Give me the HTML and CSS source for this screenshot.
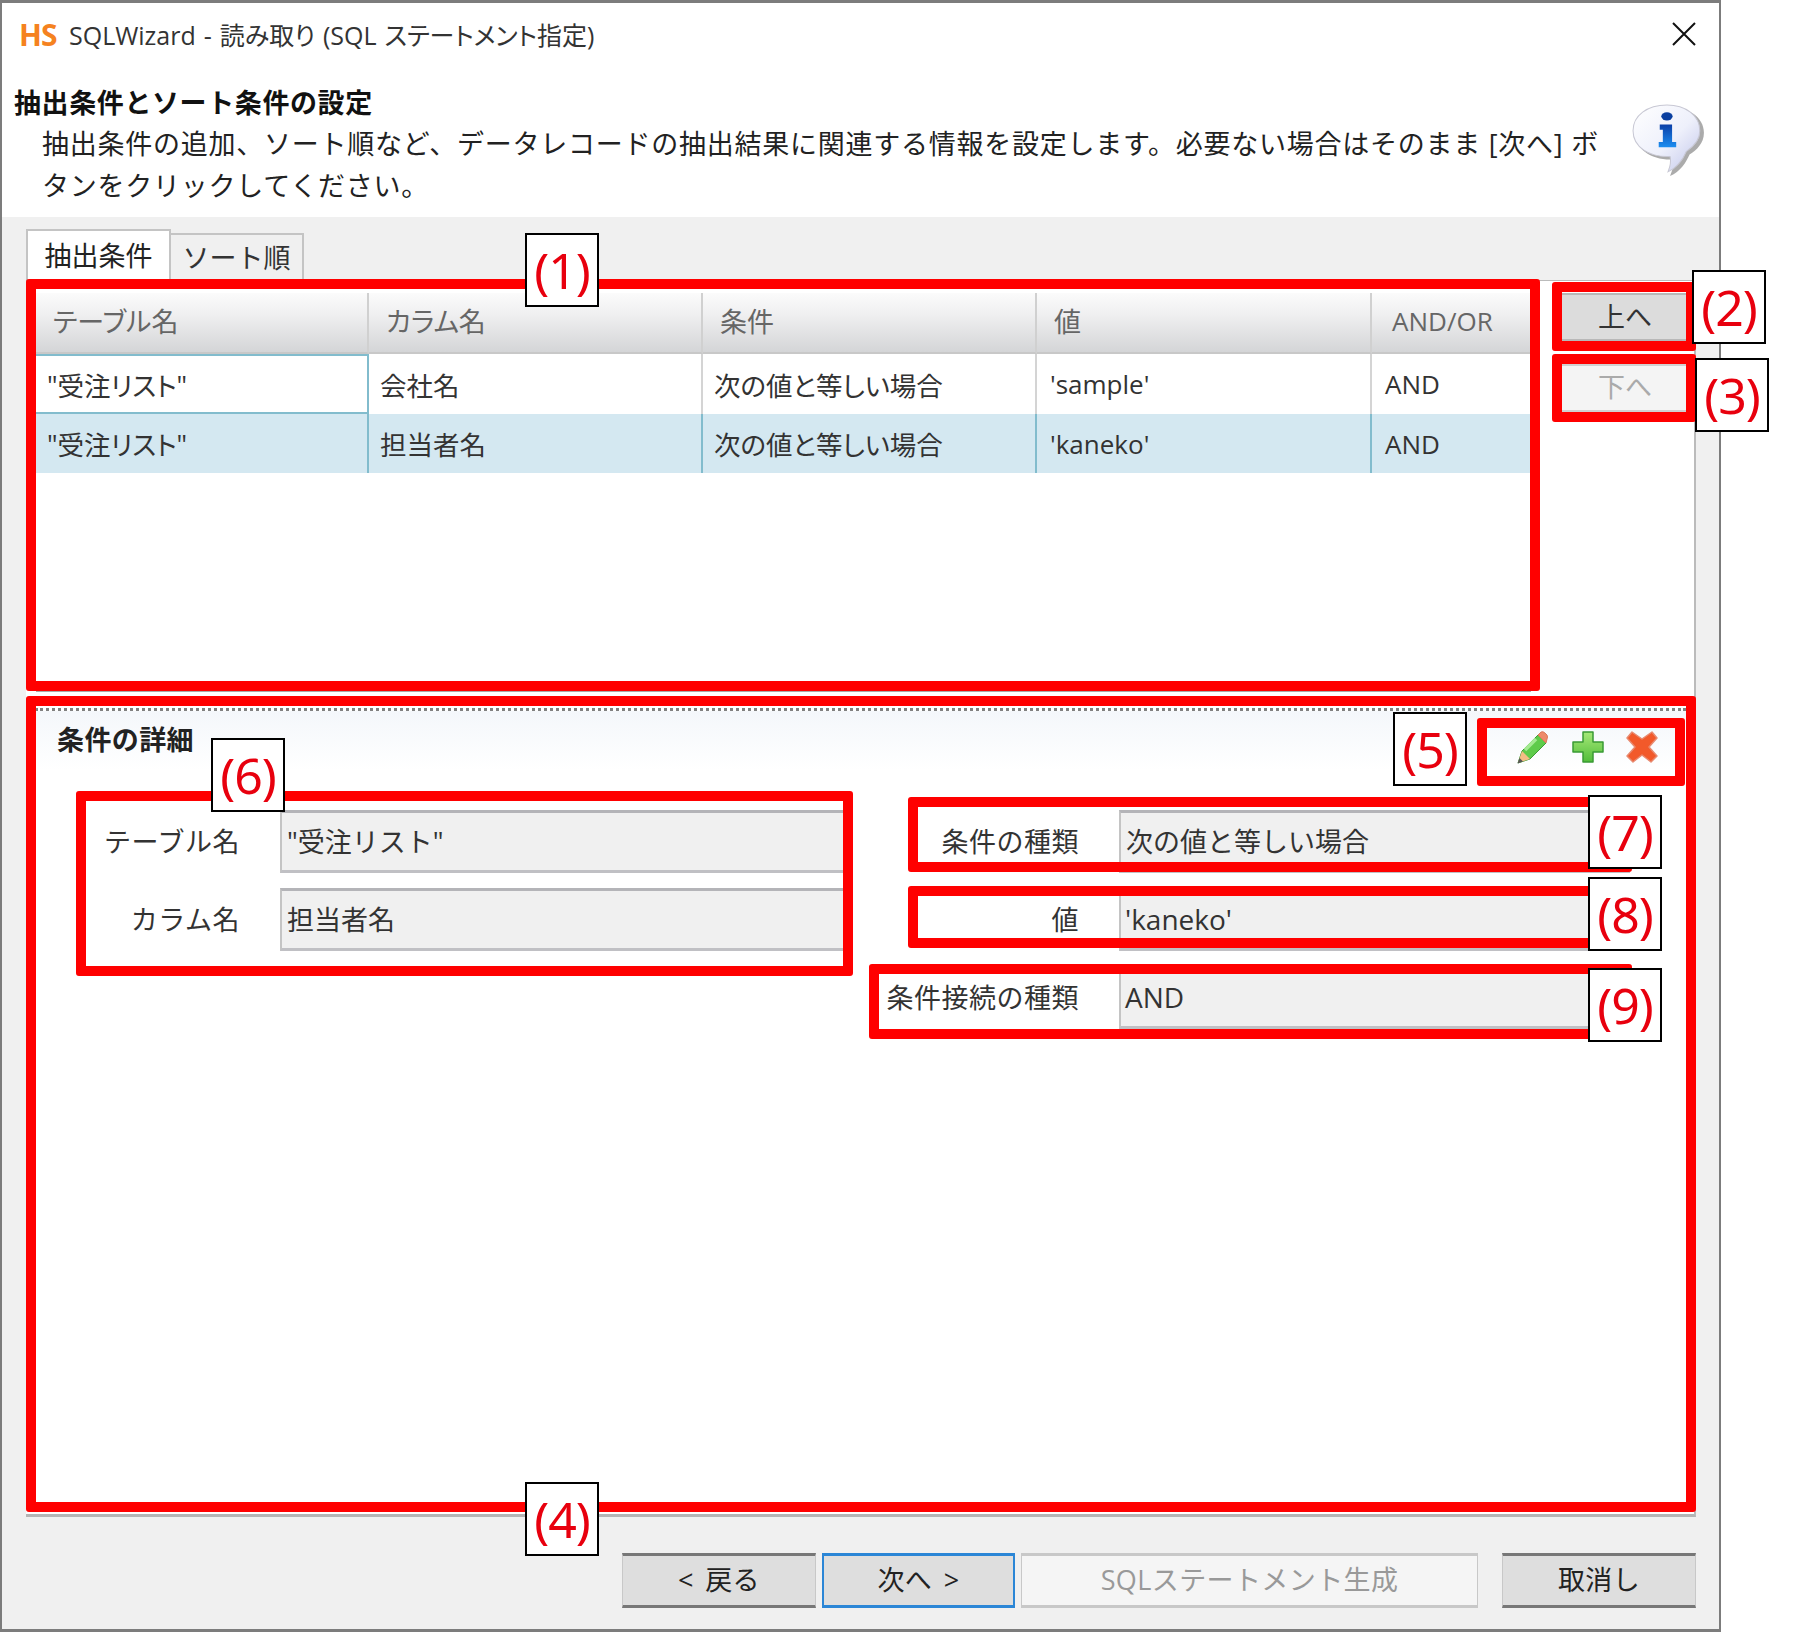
FILE: index.html
```html
<!DOCTYPE html>
<html lang="ja">
<head>
<meta charset="utf-8">
<title>SQLWizard</title>
<link rel="stylesheet" href="styles.css">
</head>
<body>
<div class="stage">
  <div class="window">
    <div class="titlebar">
      <span class="logo">HS</span>
      <span class="title">SQLWizard - 読み取り (SQL ステートメント指定)</span>
      <svg class="close" viewBox="0 0 24 24" width="24" height="24"><path d="M1 1 L23 23 M23 1 L1 23" stroke="#111" stroke-width="2" fill="none"/></svg>
    </div>
    <div class="header">
      <div class="header-text">
        <div class="heading">抽出条件とソート条件の設定</div>
        <div class="desc">抽出条件の追加、ソート順など、データレコードの抽出結果に関連する情報を設定します。必要ない場合はそのまま [次へ] ボ<br>タンをクリックしてください。</div>
      </div>
      <svg class="info" viewBox="0 0 72 72" width="74" height="74">
        <defs>
          <linearGradient id="bub" x1="0" y1="0" x2="1" y2="1"><stop offset="0" stop-color="#fff"/><stop offset="0.55" stop-color="#eef0fb"/><stop offset="1" stop-color="#bfc4ea"/></linearGradient>
          <linearGradient id="ib" x1="0" y1="0" x2="0" y2="1"><stop offset="0" stop-color="#0a3fa8"/><stop offset="1" stop-color="#1c8df0"/></linearGradient>
        </defs>
        <path d="M35 3 C54 3 69 13 69 28 C69 38 62 45 55 49 C52 56 46 66 36 70 C39 63 40 58 39 54 C18 55 2 44 2 28 C2 13 16 3 35 3 Z" fill="#8f8f8f" opacity="0.75" transform="translate(1 1)"/>
        <path d="M34 2 C52 2 66 12 66 27 C66 37 59 43 53 47 C50 54 44 63 35 67 C38 60 38 56 37 52 C17 53 1 43 1 27 C1 12 15 2 34 2 Z" fill="url(#bub)" stroke="#c8c8d4" stroke-width="1"/>
        <ellipse cx="34" cy="13" rx="5.5" ry="4" fill="#0a3fa0"/>
        <path d="M27 21 H39 V38 H43 V43 H26 V38 H30 V26 H27 Z" fill="url(#ib)"/>
      </svg>
    </div>
    <div class="content">
      <div class="tabs">
        <div class="tab tab-active">抽出条件</div>
        <div class="tab">ソート順</div>
      </div>
      <div class="panel">
        <div class="upper">
          <div class="table">
            <div class="th">テーブル名</div>
            <div class="th">カラム名</div>
            <div class="th">条件</div>
            <div class="th">値</div>
            <div class="th th-last lat">AND/OR</div>
            <div class="td td-focus">"受注リスト"</div>
            <div class="td">会社名</div>
            <div class="td">次の値と等しい場合</div>
            <div class="td lat">'sample'</div>
            <div class="td td-last lat">AND</div>
            <div class="td sel">"受注リスト"</div>
            <div class="td sel">担当者名</div>
            <div class="td sel">次の値と等しい場合</div>
            <div class="td sel lat">'kaneko'</div>
            <div class="td td-last sel lat">AND</div>
          </div>
          <div class="side">
            <button class="side-btn">上へ</button>
            <button class="side-btn side-off">下へ</button>
          </div>
        </div>
        <div class="detail">
          <div class="detail-head">
            <div class="detail-title">条件の詳細</div>
            <div class="tools">
              <svg class="pencil" viewBox="0 0 32 33" width="32" height="33">
                <path d="M2 32 L6 20 L22 4 L30 12 L14 28 Z" fill="#5ecb4a" stroke="#3f9c36" stroke-width="1"/>
                <path d="M22 4 L25 1 Q27 0 29 2 L31 4 Q32 6 31 8 L30 12 Z" fill="#ee8a6a" stroke="#d9785c" stroke-width="1"/>
                <path d="M20 8 L9 19" stroke="#a4ea92" stroke-width="3.5"/>
                <path d="M6 20 L14 28 L2 32 Z" fill="#f3bd84"/>
                <path d="M3.6 27 L7 30.4 L1.5 32.5 Z" fill="#555"/>
              </svg>
              <svg viewBox="0 0 32 32" width="32" height="32"><defs><linearGradient id="pl" x1="0" y1="0" x2="0" y2="1"><stop offset="0" stop-color="#a6e878"/><stop offset="1" stop-color="#52bd3a"/></linearGradient></defs><path d="M11 1 H21 V11 H31 V21 H21 V31 H11 V21 H1 V11 H11 Z" fill="url(#pl)" stroke="#3a9a34" stroke-width="1.5" stroke-linejoin="round"/></svg>
              <svg viewBox="0 0 32 32" width="32" height="32"><path d="M6 1 L16 8 L26 1 L31 7 L23 16 L31 25 L25 31 L16 24 L7 31 L1 25 L9 16 L1 7 Z" fill="#f2592a" stroke="#e88a70" stroke-width="1.5" stroke-linejoin="round"/></svg>
            </div>
          </div>
          <div class="detail-body">
            <div class="form form-left">
              <div class="label">テーブル名</div><div class="field">"受注リスト"</div>
              <div class="label">カラム名</div><div class="field">担当者名</div>
            </div>
            <div class="form form-right">
              <div class="label">条件の種類</div><div class="field">次の値と等しい場合</div>
              <div class="label">値</div><div class="field lat-field">'kaneko'</div>
              <div class="label">条件接続の種類</div><div class="field lat-field">AND</div>
            </div>
          </div>
        </div>
      </div>
      <div class="footer">
        <button class="foot-btn">&lt; 戻る</button>
        <button class="foot-btn foot-next">次へ &gt;</button>
        <button class="foot-btn foot-off">SQLステートメント生成</button>
        <button class="foot-btn foot-cancel">取消し</button>
      </div>
    </div>
  </div>

  <div class="mark m1"></div>
  <div class="mark m2"></div>
  <div class="mark m3"></div>
  <div class="mark m4"></div>
  <div class="mark m5"></div>
  <div class="mark m6"></div>
  <div class="mark m7"></div>
  <div class="mark m8"></div>
  <div class="mark m9"></div>
  <div class="num n1">(1)</div>
  <div class="num n2">(2)</div>
  <div class="num n3">(3)</div>
  <div class="num n4">(4)</div>
  <div class="num n5">(5)</div>
  <div class="num n6">(6)</div>
  <div class="num n7">(7)</div>
  <div class="num n8">(8)</div>
  <div class="num n9">(9)</div>
</div>
</body>
</html>
```

FILE: styles.css
```css
* { box-sizing: border-box; }
html, body { margin: 0; padding: 0; background: #fff; }
body {
  font-family: "Open Sans", "Noto Sans CJK JP", sans-serif;
  font-size: 27px;
  color: #222;
}
.stage { position: relative; width: 1797px; height: 1633px; overflow: hidden; }
.window {
  width: 1721px;
  height: 1632px;
  border: 2px solid #7c7c7c;
  border-top-width: 3px;
  border-bottom-width: 3px;
  display: flex;
  flex-direction: column;
  background: #fff;
}
.titlebar { height: 62px; display: flex; align-items: center; padding-left: 17px; padding-right: 23px; flex: none; }
.logo { color: #f58220; font-weight: 700; font-size: 30px; width: 50px; font-family: "Open Sans", sans-serif; letter-spacing: -1px; }
.title { font-size: 25px; color: #333; flex: 1; white-space: nowrap; font-feature-settings: "palt"; word-spacing: 1.5px; }
.close { flex: none; }
.header { height: 152px; flex: none; display: flex; padding: 17px 13px 0 12px; justify-content: space-between; }
.heading { font-weight: 700; line-height: 41px; color: #111; white-space: nowrap; letter-spacing: 0.6px; }
.desc { line-height: 42px; padding-left: 28px; white-space: nowrap; color: #222; letter-spacing: 0.75px; }
.info { flex: none; margin-top: 21px; }
.content { flex: 1; background: #f0f0f0; padding: 12px 23px 0 24px; display: flex; flex-direction: column; }
.tabs { display: flex; align-items: flex-end; height: 51px; flex: none; }
.tab {
  height: 47px;
  width: 133px;
  border: 2px solid #c4c4c4;
  border-bottom: none;
  border-left: none;
  background: #f0f0f0;
  color: #333;
  text-align: center;
  line-height: 46px;
}
.tab-active { height: 51px; width: 145px; background: #fff; border-left: 2px solid #c4c4c4; line-height: 50px; color: #222; }
.panel {
  height: 1237px;
  flex: none;
  background: #fff;
  border-top: 1px solid #bbb;
  border-right: 2px solid #bbb;
  border-bottom: 3px solid #b4b4b4;
  display: flex;
  flex-direction: column;
}
.upper { height: 412px; flex: none; display: flex; padding: 12px 0 0 10px; }
.table {
  width: 1495px;
  height: 399px;
  display: grid;
  grid-template-columns: 333px 334px 334px 335px 159px;
  grid-template-rows: 61px 60px 59px;
  border-bottom: 2px solid #aaa;
  align-content: start;
  font-feature-settings: "palt";
}
.th {
  background: linear-gradient(#fbfbfb, #f0f0f1 35%, #d4d5d7);
  border-right: 2px solid #d0d0d0;
  border-bottom: 2px solid #c8c8c8;
  color: #666;
  display: flex;
  align-items: center;
  padding: 0 0 4px 17px;
  white-space: nowrap;
}
.th-last { border-right: none; padding-left: 19px; }
.td {
  border-right: 2px solid #d4d4d4;
  display: flex;
  align-items: center;
  padding-left: 11px;
  white-space: nowrap;
  color: #333;
  background: #fff;
  font-size: 26.5px;
}
.td-last { border-right: none; }
.td-focus { border: 2px solid #82bccd; border-left: none; }
.sel { background: #d4e8f1; border-right-color: #82bccd; }
.td-last.sel { border-right: none; }
.table .lat { font-size: 26px; padding-left: 13px; }
.table .th-last { padding-left: 20px; }
.side { margin-left: 31px; display: flex; flex-direction: column; gap: 23px; }
.side-btn {
  width: 126px;
  height: 48px;
  border: none;
  border-top: 2px solid #b8b8b8;
  border-bottom: 2px solid #b8b8b8;
  background: #dcdcdc;
  color: #333;
  font: inherit;
  padding: 0 0 4px;
}
.side-off { background: #f4f4f4; color: #aaa; border-color: #d0d0d0; padding-bottom: 14px; }
.detail { flex: 1; margin: 15px 8px 0 9px; border-top: 3px dotted #808080; display: flex; flex-direction: column; }
.detail-head {
  height: 99px;
  flex: none;
  display: flex;
  justify-content: space-between;
  padding: 11px 28px 0 22px;
  background: linear-gradient(#f4f7fb, #fff 60%);
}
.detail-title { font-weight: 700; line-height: 36px; color: #222; letter-spacing: 0.4px; }
.tools { display: flex; gap: 22px; padding-top: 9px; }
.pencil { margin-right: 2px; }
.detail-body { display: flex; }
.form { display: grid; column-gap: 40px; row-gap: 15px; grid-auto-rows: 63px; }
.form-left { width: 815px; grid-template-columns: 205px 570px; }
.form-right { margin-left: 10px; grid-template-columns: 219px 511px; }
.label { text-align: right; line-height: 63px; color: #333; white-space: nowrap; letter-spacing: 0.5px; }
.field {
  background: #f0f0f0;
  border-top: 3px solid #b4b4b8;
  border-left: 2px solid #c4c4c4;
  border-bottom: 3px solid #c0c0c4;
  padding-left: 5px;
  line-height: 57px;
  color: #333;
  white-space: nowrap;
}
.lat-field { font-size: 28px; padding-left: 4px; }
.footer { display: flex; justify-content: flex-end; gap: 6px; margin-top: 36px; }
.foot-btn {
  width: 194px;
  height: 55px;
  border: 1px solid #c8c8c8;
  border-top: 3px solid #777;
  border-bottom: 3px solid #777;
  background: #dedede;
  color: #222;
  font: inherit;
  padding: 0 0 4px;
  letter-spacing: 0.4px;
  word-spacing: 4px;
}
.foot-next { border: 2px solid #2b86d6; border-top-width: 3px; border-bottom-width: 3px; width: 193px; }
.foot-off { width: 457px; background: #f5f5f5; color: #999; border-color: #c8c8c8; }
.foot-cancel { margin-left: 18px; }

.mark { position: absolute; border: 10px solid #f00; border-radius: 3px; }
.m1 { left: 26px; top: 279px; width: 1514px; height: 412px; }
.m2 { left: 1552px; top: 282px; width: 144px; height: 69px; }
.m3 { left: 1552px; top: 354px; width: 144px; height: 68px; }
.m4 { left: 26px; top: 696px; width: 1670px; height: 816px; }
.m5 { left: 1477px; top: 718px; width: 208px; height: 68px; }
.m6 { left: 76px; top: 791px; width: 777px; height: 185px; }
.m7 { left: 908px; top: 797px; width: 724px; height: 75px; }
.m8 { left: 908px; top: 886px; width: 724px; height: 62px; }
.m9 { left: 869px; top: 964px; width: 763px; height: 75px; }
.num {
  position: absolute;
  width: 74px;
  height: 74px;
  background: #fff;
  border: 2px solid #000;
  color: #e8000e;
  font-family: "Noto Sans", sans-serif;
  font-size: 50px;
  line-height: 71px;
  letter-spacing: -1px;
  text-align: center;
}
.n1 { left: 525px; top: 233px; }
.n2 { left: 1692px; top: 270px; }
.n3 { left: 1695px; top: 358px; }
.n4 { left: 525px; top: 1482px; }
.n5 { left: 1393px; top: 712px; }
.n6 { left: 211px; top: 738px; }
.n7 { left: 1588px; top: 795px; }
.n8 { left: 1588px; top: 877px; }
.n9 { left: 1588px; top: 968px; }
```
